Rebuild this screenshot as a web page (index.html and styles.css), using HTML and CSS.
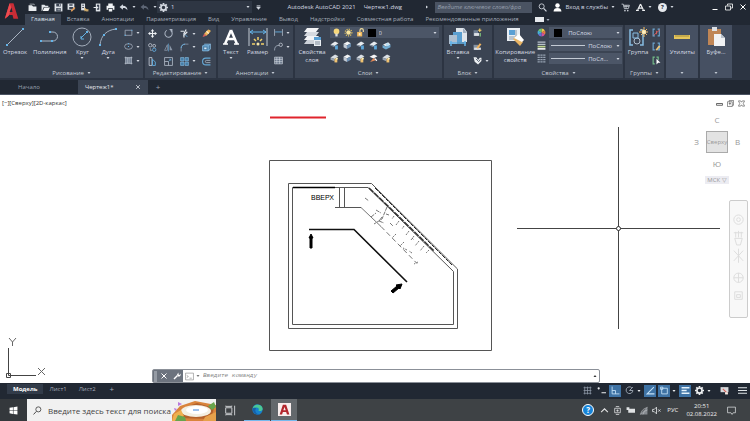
FILE: index.html
```html
<!DOCTYPE html>
<html lang="ru">
<head>
  <meta charset="UTF-8">
  <meta name="viewport" content="width=device-width, initial-scale=1.0">
  <title>Autodesk AutoCAD 2021 - Чертеж1.dwg</title>
  <link rel="stylesheet" href="styles.css">
</head>
<body>
<!-- shared icons -->
<svg class="sprite" aria-hidden="true">
  <symbol id="i-new" viewBox="0 0 16 16"><path d="M1 4h6l2 2h6v8H1z" fill="#e8ebef"/><path d="M3 2h8v2" stroke="#e8ebef" fill="none"/></symbol>
  <symbol id="i-open" viewBox="0 0 16 16"><path d="M1 3h5l2 2h5v2H5l-3 7H1z" fill="#dfe3e8"/><path d="M6 8h10l-3 6H3z" fill="#f4f5f7"/></symbol>
  <symbol id="i-save" viewBox="0 0 16 16"><path d="M1 1h14v14H1z" fill="#dfe3e8"/><path d="M4 1h8v5H4zM4 9h8v6H4z" fill="#3b4453"/><path d="M6 10h5v1H6zM6 12h5v1H6zM9 2h2v3H9z" fill="#dfe3e8"/></symbol>
  <symbol id="i-saveas" viewBox="0 0 16 16"><path d="M1 1h12v11H1z" fill="#dfe3e8"/><path d="M4 2h6v3H4zM4 7h7v4H4z" fill="#3b4453"/><path d="M7 13l6-6 2 2-6 6H7z" fill="#e29a55"/></symbol>
  <symbol id="i-web" viewBox="0 0 16 16"><path d="M2 1h7v12H2z" fill="#dfe3e8"/><path d="M4 3h3v2H4zM4 7h3v2H4z" fill="#3b4453"/><path d="M8 8l5 4-5 3z" fill="#e5b864"/><path d="M10 11h5v4h-5z" fill="#c8a66c"/></symbol>
  <symbol id="i-mobile" viewBox="0 0 16 16"><path d="M5 1h8v14H5z" fill="#dfe3e8"/><path d="M7 3h4v9H7z" fill="#3b4453"/><path d="M1 7h5V5l4 3-4 3V9H1z" fill="#e8ebef"/></symbol>
  <symbol id="i-print" viewBox="0 0 16 16"><path d="M4 1h8v4H4zM1 5h14v7h-3V9H4v3H1zM5 10h6v5H5z" fill="#f1f3f5"/></symbol>
  <symbol id="i-undo" viewBox="0 0 16 16"><path d="M1 7l6-5v3c5 0 8 3 8 8-2-3-4-4-8-4v3z" fill="currentColor"/></symbol>
  <symbol id="i-gear" viewBox="0 0 16 16"><circle cx="8" cy="8" r="4.500" fill="none" stroke="currentColor" stroke-width="3"/><path d="M8 0v3M8 13v3M0 8h3M13 8h3M2.300 2.300l2 2M11.700 11.700l2 2M2.300 13.700l2-2M11.700 4.300l2-2" stroke="currentColor" stroke-width="3"/></symbol>
  <symbol id="i-down" viewBox="0 0 8 8"><path d="M1 2h6L4 6z" fill="currentColor"/></symbol>
  <symbol id="i-search" viewBox="0 0 16 16"><circle cx="9.500" cy="6" r="4.500" fill="none" stroke="currentColor" stroke-width="1.500"/><path d="M6 9.500L1 15" stroke="currentColor" stroke-width="1.700"/></symbol>
  <symbol id="i-find" viewBox="0 0 16 16"><circle cx="6.500" cy="6" r="4.500" fill="none" stroke="currentColor" stroke-width="1.500"/><path d="M10 9.500l5 5.500" stroke="currentColor" stroke-width="2"/></symbol>
  <symbol id="i-user" viewBox="0 0 16 16"><circle cx="8" cy="4.500" r="4" fill="#fff"/><path d="M1 15c0-4 3-6 7-6s7 2 7 6z" fill="#fff"/></symbol>
  <symbol id="i-cart" viewBox="0 0 16 16"><path d="M1 2h3l2 8h7l2-6H5M5 6h9M9 4v6" fill="none" stroke="#c9ced6" stroke-width="1.500"/><circle cx="7" cy="13.500" r="1.500" fill="#c9ced6"/><circle cx="12" cy="13.500" r="1.500" fill="#c9ced6"/></symbol>
  <symbol id="i-adsk" viewBox="0 0 16 16"><path d="M8 2L3 12M8 2l5 10M5 9h6" stroke="#f0f2f4" stroke-width="2" fill="none"/><path d="M0 13h5M11 13h5" stroke="#f0f2f4" stroke-width="2"/></symbol>
  <symbol id="i-min" viewBox="0 0 16 16"><path d="M3 13h10" stroke="currentColor" stroke-width="2"/></symbol>
  <symbol id="i-restore" viewBox="0 0 16 16"><path d="M5 5V2h10v8h-3M1 6h10v8H1z" fill="none" stroke="currentColor" stroke-width="1.600"/></symbol>
  <symbol id="i-close" viewBox="0 0 16 16"><path d="M3 3l10 10M13 3L3 13" stroke="currentColor" stroke-width="2"/></symbol>
  <symbol id="i-line" viewBox="0 0 20 20"><path d="M2 18L18 2" stroke="#aab4c2"/><path d="M1 17h2v2H1zM17 1h2v2h-2z" fill="#65b4e8"/></symbol>
  <symbol id="i-pline" viewBox="0 0 20 20"><path d="M1 14h12a4.500 4.500 0 0 0 0-9h-3" fill="none" stroke="#aab4c2"/><path d="M0 13h2v2H0zM11 13h2v2h-2zM9 4h2v2H9z" fill="#65b4e8"/></symbol>
  <symbol id="i-circle" viewBox="0 0 20 20"><circle cx="10" cy="10" r="9" fill="none" stroke="#a3adbb"/><path d="M9 11l6-6M9 9v3h3" stroke="#65b4e8" fill="none"/><path d="M14 4h2v2h-2z" fill="#65b4e8"/></symbol>
  <symbol id="i-arc" viewBox="0 0 20 20"><path d="M2 18C3 8 9 3 18 2" fill="none" stroke="#a3adbb"/><path d="M1 17h2v2H1zM5 7h2v2H5zM17 1h2v2h-2z" fill="#65b4e8"/></symbol>
  <symbol id="i-rect" viewBox="0 0 16 16"><path d="M2 4h12v9H2z" fill="none" stroke="#aab4c2" stroke-width="1.300"/><path d="M1 12h2v2H1zM13 3h2v2h-2z" fill="#65b4e8"/></symbol>
  <symbol id="i-ellipse" viewBox="0 0 16 16"><ellipse cx="8" cy="8" rx="7" ry="5" fill="none" stroke="#aab4c2" stroke-width="1.300"/><path d="M7 7h2v2H7zM7 2h2v2H7z" fill="#65b4e8"/></symbol>
  <symbol id="i-hatch" viewBox="0 0 16 16"><path d="M2 2h12v12H2z" fill="#697689"/><path d="M1 3h14M1 13h14M3 1v14M13 1v14M6 3v10M9 3v10" fill="none" stroke="#cbd2dc"/></symbol>
  <symbol id="i-move" viewBox="0 0 16 16"><path d="M8 2v12M2 8h12" stroke="#eef1f5" stroke-width="2"/><path d="M8 0l3 4H5zM8 16l3-4H5zM0 8l4-3v6zM16 8l-4-3v6z" fill="#eef1f5"/></symbol>
  <symbol id="i-rotate" viewBox="0 0 16 16"><path d="M12 3a6.500 6.500 0 1 1-7-.5" fill="none" stroke="#aab4c2" stroke-width="1.800"/><path d="M9 0h6v6z" fill="#aab4c2"/></symbol>
  <symbol id="i-trim" viewBox="0 0 16 16"><path d="M1 4h6M11 1L7 8v7M13 5L6 12" stroke="#e3e7ed" stroke-width="2.200"/><path d="M9 10l4 4" stroke="#65b4e8" stroke-width="1.500"/></symbol>
  <symbol id="i-erase" viewBox="0 0 16 16"><path d="M1 14l3-6 4 4z" fill="#d9635d"/><path d="M4 8l7-7 4 1v3l-7 7z" fill="#efb75a"/><path d="M8 4l4 4" stroke="#fff1cf" stroke-width="2"/></symbol>
  <symbol id="i-copy" viewBox="0 0 16 16"><circle cx="4" cy="4" r="3" fill="none" stroke="#c3cad4" stroke-width="1.400"/><circle cx="11" cy="5" r="2.500" fill="none" stroke="#c3cad4" stroke-width="1.400"/><circle cx="11" cy="12" r="3" fill="none" stroke="#65b4e8" stroke-width="1.400"/><path d="M4 9v4h3" stroke="#c3cad4" fill="none"/></symbol>
  <symbol id="i-mirror" viewBox="0 0 16 16"><path d="M6 3v10H1z" fill="none" stroke="#8b97a8" stroke-width="1.400"/><path d="M10 3v10h5z" fill="#8b97a8"/><path d="M8 1v14" stroke="#65b4e8"/></symbol>
  <symbol id="i-fillet" viewBox="0 0 16 16"><path d="M2 15V9c0-4 3-7 7-7h6" fill="none" stroke="#8b97a8" stroke-width="1.500"/><path d="M2 9c0-4 3-7 7-7" fill="none" stroke="#65b4e8" stroke-width="1.500"/></symbol>
  <symbol id="i-explode" viewBox="0 0 16 16"><path d="M4 2h10v9l-3 3H1V5z" fill="#497ea8"/><path d="M1 5h10v9H1zM11 5l4-3M4 2h11v9l-4 3" fill="none" stroke="#8fc6ec" stroke-width="1.300"/><path d="M4 8h4v3H4z" fill="#dbe9f4"/></symbol>
  <symbol id="i-stretch" viewBox="0 0 16 16"><path d="M2 1h5v14H2z" fill="none" stroke="#c3cad4" stroke-width="1.500"/><path d="M8 4l5 5v6H8z" fill="none" stroke="#65b4e8" stroke-width="1.500"/></symbol>
  <symbol id="i-scale" viewBox="0 0 16 16"><path d="M1 1h14v14H1zM1 8h7v7" fill="none" stroke="#b5bfcc" stroke-width="1.400"/><path d="M8 8l4-4M9 4h3v3" stroke="#65b4e8" fill="none"/></symbol>
  <symbol id="i-array" viewBox="0 0 16 16"><path d="M1 1h6v6H1zM9 1h6v6H9zM1 9h6v6H1zM9 9h6v6H9z" fill="#477fa9" stroke="#8fc6ec"/></symbol>
  <symbol id="i-offset" viewBox="0 0 16 16"><path d="M15 2H7a6 6 0 0 0 0 12h8" fill="none" stroke="#65a7d4" stroke-width="2"/><path d="M15 6H8a2 2 0 0 0 0 4h7" fill="none" stroke="#aab4c2" stroke-width="1.500"/></symbol>
  <symbol id="i-text" viewBox="0 0 20 20"><path d="M10 3L4 17M10 3l6 14M6 12h8" fill="none" stroke="#fff" stroke-width="2.500"/><path d="M2 17h5M13 17h5" stroke="#fff" stroke-width="1.500"/></symbol>
  <symbol id="i-dim" viewBox="0 0 20 20"><path d="M1 1v18M19 1v18" stroke="#c3cad4"/><path d="M2 5h16M5 3L2 5l3 2M15 3l3 2-3 2" stroke="#65b4e8" fill="none"/><path d="M10 10v3M6 12l2 2M14 12l-2 2M4 17h3M13 17h3" stroke="#f2d16b" stroke-width="1.500"/><circle cx="10" cy="17" r="1.500" fill="#f7e6a5"/></symbol>
  <symbol id="i-lindim" viewBox="0 0 16 16"><path d="M1 2v12M15 2v12" stroke="#aab4c2" stroke-width="1.500"/><path d="M2 7h12" stroke="#65b4e8" stroke-width="1.500"/></symbol>
  <symbol id="i-leader" viewBox="0 0 16 16"><path d="M1 15c0-6 2-9 8-9" fill="none" stroke="#aab4c2" stroke-width="1.400"/><circle cx="12" cy="5" r="3" fill="none" stroke="#c3cad4" stroke-width="1.400"/></symbol>
  <symbol id="i-table" viewBox="0 0 16 16"><path d="M1 2h14v12H1z" fill="#697689"/><path d="M1 2h14v12H1zM1 6h14M1 10h14M5 2v12M10 2v12" fill="none" stroke="#dbe0e7"/></symbol>
  <symbol id="i-layers" viewBox="0 0 20 20"><path d="M5 1h12l-3 4H2z" fill="#f3f4f6"/><path d="M5 5h12l-3 4H2z" fill="#d6dae0"/><path d="M5 9h12l-3 4H2z" fill="#f3f4f6"/><path d="M5 13h10l-3 4H2z" fill="#cdd2d9"/><path d="M12 10h7v9h-7z" fill="#e9eef3"/><path d="M12 10h7v3h-7z" fill="#5ba0d4"/><path d="M13 15h5M13 17h5" stroke="#7c8998"/></symbol>
  <symbol id="i-bulb" viewBox="0 0 16 16"><circle cx="8" cy="6" r="5" fill="#f6d77b"/><path d="M6 10h4v5H6z" fill="#d9dde2"/></symbol>
  <symbol id="i-sun" viewBox="0 0 16 16"><circle cx="8" cy="8" r="4" fill="#f9e59d"/><circle cx="8" cy="8" r="6" fill="none" stroke="#eac95f" stroke-width="2" stroke-dasharray="2 2"/></symbol>
  <symbol id="i-lock" viewBox="0 0 16 16"><path d="M7 8V4a3 3 0 0 1 6 0v3" fill="none" stroke="#f3dfa0" stroke-width="2"/><path d="M2 7h9v8H2z" fill="#f0b95d"/><path d="M5 9h3v4H5z" fill="#fff0cc"/></symbol>
  <symbol id="i-lay-a" viewBox="0 0 16 16"><path d="M1 6l8-5 6 3-7 5z" fill="#e7ebef"/><path d="M1 6l7 3v2L1 8z" fill="#8693a5"/><path d="M9 8h5v7H9z" fill="#5ca5d8"/></symbol>
  <symbol id="i-lay-b" viewBox="0 0 16 16"><path d="M1 5l7-4 6 3-7 4z" fill="#f1f3f5"/><path d="M1 5l6 3v6l-6-3z" fill="#c5ccd6"/><path d="M7 8l7-4v6l-7 4z" fill="#6c90b4"/></symbol>
  <symbol id="i-lay-c" viewBox="0 0 16 16"><path d="M1 6l8-5 6 3-7 5z" fill="#d9dfe5"/><path d="M1 6l7 3v4L1 10z" fill="#9aa5b3"/><path d="M8 8h5v7H8z" fill="#efc271"/><circle cx="12" cy="8" r="2" fill="#fff0b7"/></symbol>
  <symbol id="i-lay-d" viewBox="0 0 16 16"><path d="M2 6l9-4 4 4-8 4z" fill="#e8ebef"/><path d="M1 7l6 3 8-4v5l-8 4-6-3z" fill="#70acd2"/><path d="M7 4h5v5H7z" fill="#b8dff5"/></symbol>
  <symbol id="i-lay-e" viewBox="0 0 16 16"><path d="M1 5l8-4 6 3-7 4z" fill="#f3f4f6"/><path d="M2 14l6-7 4 4z" fill="#e58956"/><path d="M10 8l4 4" stroke="#fff" stroke-width="2"/></symbol>
  <symbol id="i-insert" viewBox="0 0 20 20"><path d="M8 1h8l3 4v10H8z" fill="#dfe5eb"/><path d="M15 1v5h4" fill="#9eafc1"/><path d="M5 5h9v10H5z" fill="#5a9fd1"/><path d="M1 8h8v9H1z" fill="#aebfd0"/><path d="M2 16h16M3 14v5M17 14v5" stroke="#65b4e8" stroke-width="1.500"/></symbol>
  <symbol id="i-blk-a" viewBox="0 0 16 16"><path d="M1 4h8v10H1z" fill="#708094"/><path d="M2 9h9v5H2z" fill="#dde1e6"/><path d="M12 1v6M9 4h6" stroke="#f4cf67" stroke-width="2"/><path d="M13 9v6" stroke="#7dc27c" stroke-width="2"/></symbol>
  <symbol id="i-blk-b" viewBox="0 0 16 16"><path d="M1 5h8v9H1z" fill="#8593a4"/><path d="M2 10h12v4H2z" fill="#dde1e6"/><path d="M6 10l6-8 3 2-6 8z" fill="#efb35e"/></symbol>
  <symbol id="i-blk-c" viewBox="0 0 16 16"><path d="M1 2h5l3 5 3-4h3v6l-6 6-6-5z" fill="#eceff2"/><path d="M5 5l5 5 3-4" stroke="#4b5869" stroke-width="1.500" fill="none"/></symbol>
  <symbol id="i-match" viewBox="0 0 20 20"><path d="M2 1h13v13H2z" fill="#e9eef3"/><path d="M4 3h6v5H4z" fill="#5ba0d4"/><path d="M11 3v6M4 10h9M4 12h9" stroke="#8999aa"/><path d="M8 12l3-3 7 6-3 4z" fill="#e9b464"/><path d="M9 11l5-4 5 6-2 2z" fill="#fff"/></symbol>
  <symbol id="i-color" viewBox="0 0 16 16"><path d="M8 8V1a7 7 0 0 1 6 3.500z" fill="#e8c84c"/><path d="M8 8l6-3.500a7 7 0 0 1 0 7z" fill="#e87941"/><path d="M8 8l6 3.500A7 7 0 0 1 8 15z" fill="#d4509c"/><path d="M8 8v7a7 7 0 0 1-6-3.500z" fill="#646fd5"/><path d="M8 8l-6 3.500a7 7 0 0 1 0-7z" fill="#46afd8"/><path d="M8 8L2 4.500A7 7 0 0 1 8 1z" fill="#6dc670"/></symbol>
  <symbol id="i-weight" viewBox="0 0 16 16"><path d="M1 2h14M1 6h14" stroke="#b9c1cb" stroke-width="2"/><path d="M1 10h14" stroke="#bfd68e" stroke-width="3"/><path d="M1 14h14" stroke="#eef0f2" stroke-width="3"/></symbol>
  <symbol id="i-ltype" viewBox="0 0 16 16"><path d="M1 2h14M1 6h14M1 10h14M1 14h14" stroke="#97a3b3" stroke-width="2" stroke-dasharray="4 1"/></symbol>
  <symbol id="i-group" viewBox="0 0 20 20"><path d="M5 3H2v15h3M12 3h3v15h-3" fill="none" stroke="#87bce2" stroke-width="1.500"/><circle cx="9" cy="14" r="3" fill="none" stroke="#b1bfce"/><path d="M5 6h5v5H5z" fill="none" stroke="#87bce2"/><path d="M16 0v10M11 5h9M13 2l6 6M19 2l-6 6" stroke="#f4bd66"/><circle cx="16" cy="5" r="2" fill="#fff0c0"/></symbol>
  <symbol id="i-grp-a" viewBox="0 0 16 16"><path d="M5 2H2v12h3M10 2h3v12h-3" fill="none" stroke="#6da7d2" stroke-width="2"/><path d="M3 13L14 3M8 5v6" stroke="#d95c5c" stroke-width="1.600"/></symbol>
  <symbol id="i-grp-b" viewBox="0 0 16 16"><path d="M5 2H2v12h3M10 2h3v12h-3" fill="none" stroke="#6da7d2" stroke-width="2"/><path d="M6 14l6-8 3 2-6 7z" fill="#edc77c"/></symbol>
  <symbol id="i-grp-c" viewBox="0 0 16 16"><path d="M5 2H2v12h3M8 2h3v5" fill="none" stroke="#74be8a" stroke-width="2"/><path d="M8 5l7 7h-4l-3 3z" fill="#fff"/></symbol>
  <symbol id="i-ruler" viewBox="0 0 20 20"><path d="M2 8h16v4H2z" fill="#e6c65c"/><path d="M4 8v2M6 8v2M8 8v2M10 8v2M12 8v2M14 8v2M16 8v2" stroke="#8a752f" stroke-width=".7"/></symbol>
  <symbol id="i-paste" viewBox="0 0 20 20"><path d="M2 2h13v16H2z" fill="#c08656"/><path d="M6 0h5v4H6z" fill="#dce0e5"/><path d="M8 7h7l4 4v8H8z" fill="#f1f2f4"/><path d="M15 7v4h4" fill="#b9c1cb"/></symbol>
</svg>

<header class="app-header">
  <a class="logo" href="#" aria-label="AutoCAD">
    <svg viewBox="0 0 26 25"><path d="M10 3h4l5 16h-5l-1-4H9l-1 2-3 2z" fill="#c92d36"/><path d="M10 3L5 19l4-3 3-8z" fill="#ee4b50"/><path d="M10 12l2-5 1 5z" fill="#212833"/></svg>
  </a>
  <div class="header-rows">
    <div class="titlebar">
      <div class="quick">
        <button aria-label="Создать"><svg><use href="#i-new"/></svg></button>
        <button aria-label="Открыть"><svg><use href="#i-open"/></svg></button>
        <button aria-label="Сохранить"><svg><use href="#i-save"/></svg></button>
        <button aria-label="Сохранить как"><svg><use href="#i-saveas"/></svg></button>
        <button aria-label="Открыть из Web"><svg><use href="#i-web"/></svg></button>
        <button aria-label="Сохранить в Web"><svg><use href="#i-mobile"/></svg></button>
        <button aria-label="Печать"><svg><use href="#i-print"/></svg></button>
        <button aria-label="Отменить"><svg><use href="#i-undo"/></svg></button>
        <svg class="caret"><use href="#i-down"/></svg>
        <button class="redo" aria-label="Повторить"><svg><use href="#i-undo"/></svg></button>
        <svg class="caret"><use href="#i-down"/></svg>
      </div>
      <div class="workspace">
        <svg class="icon"><use href="#i-gear"/></svg>
        <select aria-label="Рабочее пространство"><option>1</option></select>
        <svg class="caret"><use href="#i-down"/></svg>
      </div>
      <button class="more" aria-label="Настройка панели"><svg viewBox="0 0 8 8"><path d="M1 1h6M1 3h6L4 7z" fill="currentColor" stroke="currentColor"/></svg></button>
      <h1><span>Autodesk AutoCAD 2021</span><span>Чертеж1.dwg</span></h1>
      <div class="account">
        <svg class="caret" viewBox="0 0 8 8"><path d="M2 1v6l4-3z" fill="currentColor"/></svg>
        <input class="keyword" type="search" aria-label="Поиск" placeholder="Введите ключевое слово/фразу">
        <button aria-label="Найти"><svg class="icon"><use href="#i-find"/></svg></button>
        <button class="signin"><svg class="icon"><use href="#i-user"/></svg>Вход в службы<svg class="caret"><use href="#i-down"/></svg></button>
        <button aria-label="Магазин"><svg class="icon"><use href="#i-cart"/></svg></button>
        <button aria-label="Приложения"><svg class="icon"><use href="#i-adsk"/></svg><svg class="caret"><use href="#i-down"/></svg></button>
        <button class="help" aria-label="Справка"><b>?</b><svg class="caret"><use href="#i-down"/></svg></button>
      </div>
      <div class="window-controls">
        <button aria-label="Свернуть"><svg><use href="#i-min"/></svg></button>
        <button aria-label="Восстановить"><svg><use href="#i-restore"/></svg></button>
        <button aria-label="Закрыть"><svg><use href="#i-close"/></svg></button>
      </div>
    </div>
    <nav class="ribbon-tabs">
      <a class="active" href="#">Главная</a>
      <a href="#">Вставка</a>
      <a href="#">Аннотации</a>
      <a href="#">Параметризация</a>
      <a href="#">Вид</a>
      <a href="#">Управление</a>
      <a href="#">Вывод</a>
      <a href="#">Надстройки</a>
      <a href="#">Совместная работа</a>
      <a href="#">Рекомендованные приложения</a>
      <button aria-label="Свернуть ленту"><i></i><svg class="caret"><use href="#i-down"/></svg></button>
    </nav>
  </div>
</header>

<main class="ribbon">
  <section class="panel">
    <div class="tools draw-tools">
      <button class="big"><svg><use href="#i-line"/></svg>Отрезок</button>
      <button class="big"><svg><use href="#i-pline"/></svg>Полилиния</button>
      <button class="big"><svg><use href="#i-circle"/></svg>Круг<svg class="caret"><use href="#i-down"/></svg></button>
      <button class="big"><svg><use href="#i-arc"/></svg>Дуга<svg class="caret"><use href="#i-down"/></svg></button>
      <div class="stack">
        <button aria-label="Прямоугольник"><svg><use href="#i-rect"/></svg><svg class="caret"><use href="#i-down"/></svg></button>
        <button aria-label="Эллипс"><svg><use href="#i-ellipse"/></svg><svg class="caret"><use href="#i-down"/></svg></button>
        <button aria-label="Штриховка"><svg><use href="#i-hatch"/></svg><svg class="caret"><use href="#i-down"/></svg></button>
      </div>
    </div>
    <button class="panel-title">Рисование <svg class="caret"><use href="#i-down"/></svg></button>
  </section>

  <section class="panel">
    <div class="tools edit-tools">
      <button aria-label="Перенести"><svg><use href="#i-move"/></svg></button>
      <button aria-label="Повернуть"><svg><use href="#i-rotate"/></svg></button>
      <button aria-label="Обрезать"><svg><use href="#i-trim"/></svg><svg class="caret"><use href="#i-down"/></svg></button>
      <button aria-label="Стереть"><svg><use href="#i-erase"/></svg></button>
      <button aria-label="Копировать"><svg><use href="#i-copy"/></svg></button>
      <button aria-label="Зеркало"><svg><use href="#i-mirror"/></svg></button>
      <button aria-label="Сопряжение"><svg><use href="#i-fillet"/></svg><svg class="caret"><use href="#i-down"/></svg></button>
      <button aria-label="Расчленить"><svg><use href="#i-explode"/></svg></button>
      <button aria-label="Растянуть"><svg><use href="#i-stretch"/></svg></button>
      <button aria-label="Масштаб"><svg><use href="#i-scale"/></svg></button>
      <button aria-label="Массив"><svg><use href="#i-array"/></svg><svg class="caret"><use href="#i-down"/></svg></button>
      <button aria-label="Подобие"><svg><use href="#i-offset"/></svg></button>
    </div>
    <button class="panel-title">Редактирование <svg class="caret"><use href="#i-down"/></svg></button>
  </section>

  <section class="panel">
    <div class="tools note-tools">
      <button class="big"><svg><use href="#i-text"/></svg>Текст<svg class="caret"><use href="#i-down"/></svg></button>
      <button class="big"><svg><use href="#i-dim"/></svg>Размер</button>
      <div class="stack">
        <button aria-label="Линейный"><svg><use href="#i-lindim"/></svg><svg class="caret"><use href="#i-down"/></svg></button>
        <button aria-label="Выноска"><svg><use href="#i-leader"/></svg><svg class="caret"><use href="#i-down"/></svg></button>
        <button aria-label="Таблица"><svg><use href="#i-table"/></svg></button>
      </div>
    </div>
    <button class="panel-title">Аннотации <svg class="caret"><use href="#i-down"/></svg></button>
  </section>

  <section class="panel">
    <div class="tools layer-tools">
      <button class="big"><svg><use href="#i-layers"/></svg>Свойства<br>слоя</button>
      <div class="layer-side">
        <div class="combo">
          <svg><use href="#i-bulb"/></svg><svg><use href="#i-sun"/></svg><svg><use href="#i-lock"/></svg><i class="swatch"></i>
          <select aria-label="Слой"><option>0</option></select>
          <svg class="caret"><use href="#i-down"/></svg>
        </div>
        <div class="layer-grid">
          <button aria-label="Отключить"><svg><use href="#i-lay-a"/></svg></button>
          <button aria-label="Изолировать"><svg><use href="#i-lay-b"/></svg></button>
          <button aria-label="Заморозить"><svg><use href="#i-lay-a"/></svg></button>
          <button aria-label="Блокировать"><svg><use href="#i-lay-a"/></svg></button>
          <button aria-label="Сделать текущим"><svg><use href="#i-lay-d"/></svg></button>
          <button aria-label="Включить все слои"><svg><use href="#i-lay-c"/></svg></button>
          <button aria-label="Отменить изоляцию"><svg><use href="#i-lay-b"/></svg></button>
          <button aria-label="Разморозить все слои"><svg><use href="#i-lay-c"/></svg></button>
          <button aria-label="Разблокировать"><svg><use href="#i-lay-e"/></svg></button>
          <button aria-label="Копировать свойства слоя"><svg><use href="#i-lay-c"/></svg></button>
        </div>
      </div>
    </div>
    <button class="panel-title">Слои <svg class="caret"><use href="#i-down"/></svg></button>
  </section>

  <section class="panel">
    <div class="tools">
      <button class="big"><svg><use href="#i-insert"/></svg>Вставка<svg class="caret"><use href="#i-down"/></svg></button>
      <div class="stack">
        <button aria-label="Создать блок"><svg><use href="#i-blk-a"/></svg></button>
        <button aria-label="Редактировать блок"><svg><use href="#i-blk-b"/></svg></button>
        <button aria-label="Атрибуты"><svg><use href="#i-blk-c"/></svg><svg class="caret"><use href="#i-down"/></svg></button>
      </div>
    </div>
    <button class="panel-title">Блок <svg class="caret"><use href="#i-down"/></svg></button>
  </section>

  <section class="panel">
    <div class="tools prop-tools">
      <button class="big"><svg><use href="#i-match"/></svg>Копирование<br>свойств</button>
      <div class="props">
        <div class="prop"><svg><use href="#i-color"/></svg><div class="combo"><i class="swatch"></i><select aria-label="Цвет"><option>ПоСлою</option></select><svg class="caret"><use href="#i-down"/></svg></div></div>
        <div class="prop"><svg><use href="#i-weight"/></svg><div class="combo"><i class="rule"></i><select aria-label="Вес линий"><option>ПоСлою</option></select><svg class="caret"><use href="#i-down"/></svg></div></div>
        <div class="prop"><svg><use href="#i-ltype"/></svg><div class="combo"><i class="rule"></i><select aria-label="Тип линий"><option>ПоСл...</option></select><svg class="caret"><use href="#i-down"/></svg></div></div>
      </div>
    </div>
    <button class="panel-title">Свойства <svg class="caret"><use href="#i-down"/></svg></button>
  </section>

  <section class="panel">
    <div class="tools">
      <button class="big"><svg><use href="#i-group"/></svg>Группа</button>
      <div class="stack">
        <button aria-label="Разгруппировать"><svg><use href="#i-grp-a"/></svg></button>
        <button aria-label="Редактировать группу"><svg><use href="#i-grp-b"/></svg></button>
        <button aria-label="Выбор группы"><svg><use href="#i-grp-c"/></svg></button>
      </div>
    </div>
    <button class="panel-title">Группы <svg class="caret"><use href="#i-down"/></svg></button>
  </section>

  <section class="panel folded">
    <div class="tools"><button class="big"><svg><use href="#i-ruler"/></svg>Утилиты</button></div>
    <button class="panel-title" aria-label="Развернуть утилиты"><svg class="caret"><use href="#i-down"/></svg></button>
  </section>
  <section class="panel folded">
    <div class="tools"><button class="big"><svg><use href="#i-paste"/></svg>Буфе...</button></div>
    <button class="panel-title" aria-label="Развернуть буфер"><svg class="caret"><use href="#i-down"/></svg></button>
  </section>
</main>

<nav class="file-tabs">
  <a href="#">Начало</a>
  <a class="active" href="#">Чертеж1*<svg><use href="#i-close"/></svg></a>
  <button aria-label="Новый чертеж">+</button>
</nav>

<div class="canvas">
  <svg class="drawing" viewBox="0 95 750 288" role="img" aria-label="План лестницы">
    <g fill="none" stroke="#555">
      <path d="M269.500 160.500h222v190h-222z"/>
      <path d="M288.500 183.500h83l86 85.500v59.500h-169z"/>
      <path d="M292.500 187.500H368l85.500 84v53h-161z"/>
      <path d="M339.500 188v19M344.500 188v19M335 207.500h26"/>
    </g>
    <path d="M293 187.500h42" stroke="#000" stroke-width="1.500"/>
    <path d="M270 117.500h56" stroke="#e0242c" stroke-width="2"/>
    <path d="M375 188l77 77" stroke="#222" stroke-dasharray="4 1"/>
    <path d="M369 188l20 19 45 44" stroke="#333" stroke-width="1.500" stroke-dasharray="6 1" fill="none"/>
    <g fill="none" stroke="#777">
      <path d="M361 207.500l20 19" />
      <path d="M381 226.500l36 37" stroke-dasharray="5 3"/>
      <path d="M365 198l4 3M376 210l5 3M387 207l-5 12-8 5M371 217l5-4M382 217l-3 4 5 2M390 223l3 3M386 214l3 1" stroke-dasharray="4 1"/>
      <path d="M394 216l-2 3M399 221l-3 4M404 226l-2 3M409 231l-3 4M414 236l-3 4M419 241l-4 5M424 246l-4 5M429 250l-3 3M396 234l-4 4M404 242l-4 4M407 250l-4-2M412 253l-3-2M412 238l2 2M418 262l-4 2" stroke-dasharray="2 1"/>
    </g>
    <path d="M309 229.500h45l53 52.500" fill="none" stroke="#111" stroke-width="1.600"/>
    <path d="M311 234l2 4h-1v10h-2v-10h-1zM402 284l-2 5-1-1-6 5-2-2 6-5-1-1z" fill="#000" stroke="#000" stroke-linejoin="round"/>
    <text x="311" y="200" font-size="7">ВВЕРХ</text>
    <g fill="none" stroke="#444">
      <path d="M517 228.500h203M618.500 127v202"/>
      <path d="M8.500 348v27.500H36M6.500 373.500h4v4h-4z"/>
    </g>
    <circle cx="618.500" cy="228.500" r="2" fill="#fff" stroke="#333"/>
    <path d="M9 338l3.500 4 3.500-4M12.500 342v4M38 368l7 7M45 368l-7 7" fill="none" stroke="#666"/>
  </svg>

  <div class="view-label">[−][Сверху][2D-каркас]</div>
  <div class="view-controls">
    <button aria-label="Свернуть вид"><svg viewBox="0 0 16 16"><path d="M1 8h14v4H1z" fill="none" stroke="currentColor" stroke-width="2"/></svg></button>
    <button aria-label="Развернуть вид"><svg viewBox="0 0 16 16"><path d="M5 4V1h10v11h-3M1 4h11v11H1zM4 8h5M6.500 5v7" fill="none" stroke="currentColor" stroke-width="1.500"/></svg></button>
    <button aria-label="Закрыть вид"><svg viewBox="0 0 16 16"><path d="M1 2h5l2 3 2-3h5l-3 6 3 6h-5l-2-3-2 3H1l3-6z" fill="none" stroke="currentColor" stroke-width="1.500"/></svg></button>
  </div>
  <div class="viewcube">
    <span class="north">С</span>
    <span class="west">З</span><button class="face">Сверху</button><span class="east">В</span>
    <span class="south">Ю</span>
    <button class="ucs">МСК ▽</button>
  </div>
  <div class="navbar">
    <svg viewBox="0 0 16 112"><g fill="none" stroke="#dcdcdc"><circle cx="8" cy="14" r="5"/><circle cx="8" cy="14" r="2"/><path d="M3 28h10M5 33v-6M8 33v-7M11 33v-6M4 34h8l-2 7H6zM3 47l10 11M13 47L3 58M8 45v15"/><circle cx="8" cy="76" r="5"/><path d="M3 76h10M8 71v10M4 91h8v8H4zM6 94h4v3H6z"/></g></svg>
  </div>

  <form class="command">
    <i class="grip"></i>
    <button type="button" aria-label="Закрыть"><svg><use href="#i-close"/></svg></button>
    <button type="button" aria-label="Настройка"><svg viewBox="0 0 16 16"><path d="M2 14l7-7" stroke="currentColor" stroke-width="3"/><path d="M8 5l3-4v4l3 1 1-3c2 4-2 7-5 6z" fill="currentColor"/></svg></button>
    <label for="cmd"><svg viewBox="0 0 16 16"><path d="M1 2h14v12H1zM3 6l3 2-3 2M8 11h4" fill="none" stroke="currentColor"/></svg><svg class="caret"><use href="#i-down"/></svg></label>
    <input id="cmd" type="text" placeholder="Введите команду">
    <svg class="caret up"><use href="#i-down"/></svg>
  </form>
</div>

<footer class="status">
  <nav class="layout-tabs">
    <a class="active" href="#">Модель</a>
    <a href="#">Лист1</a>
    <a href="#">Лист2</a>
    <button aria-label="Новый лист">+</button>
  </nav>
  <div class="modes">
    <button aria-label="Сетка"><svg viewBox="0 0 16 16"><path d="M1 3h14M1 8h14M1 13h14M3 1v14M8 1v14M13 1v14" stroke="#929cab" stroke-width="1.300"/></svg></button>
    <button aria-label="Привязка"><svg viewBox="0 0 16 16"><path d="M1 4h4M3 2v4M8 12h8" stroke="#eef0f2" stroke-width="2"/></svg></button>
    <button class="on" aria-label="Орто"><svg viewBox="0 0 16 16"><path d="M2 1v13h13M2 8h6v6" fill="none" stroke="#c6e2f8" stroke-width="1.500"/></svg></button>
    <button aria-label="Полярное"><svg viewBox="0 0 16 16"><path d="M12 3a6 6 0 1 0 2 5H8l6-6" fill="none" stroke="#aab3bf" stroke-width="1.500"/></svg></button>
    <svg class="caret"><use href="#i-down"/></svg>
    <button class="on" aria-label="Отслеживание"><svg viewBox="0 0 16 16"><path d="M15 14H2L14 2" fill="none" stroke="#c6e2f8" stroke-width="1.800"/></svg></button>
    <button class="on" aria-label="Объектная привязка"><svg viewBox="0 0 16 16"><path d="M3 4h10v10H3zM1 2h4v4H1z" fill="none" stroke="#c6e2f8" stroke-width="1.500"/></svg></button>
    <svg class="caret"><use href="#i-down"/></svg>
    <button class="on" aria-label="Вес линий"><svg viewBox="0 0 16 16"><path d="M1 3h14M1 8h9M1 13h14" stroke="#e7f3fc" stroke-width="2.500"/></svg></button>
    <button aria-label="Параметры"><svg><use href="#i-gear"/></svg></button>
    <svg class="caret"><use href="#i-down"/></svg>
    <button class="wide" aria-label="Уведомления"><svg viewBox="0 0 16 16"><path d="M1 2h14v9H1z" fill="#d7d9dc"/><path d="M5 5l9 9" stroke="#d66057" stroke-width="2"/><path d="M9 11h5v4H9z" fill="#f5eee9"/></svg></button>
    <button aria-label="Меню"><svg viewBox="0 0 16 16"><path d="M0 3h16M0 8h16M0 13h16" stroke="#e0e3e7" stroke-width="1.800"/></svg></button>
  </div>
</footer>

<footer class="taskbar">
  <button class="start" aria-label="Пуск"><svg viewBox="0 0 16 16"><path d="M1 3l6-1v5H1zM8 2l7-1v6H8zM1 8h6v6l-6-1zM8 8h7v7l-7-1z" fill="#fff"/></svg></button>
  <label class="search">
    <svg class="icon"><use href="#i-search"/></svg>
    <input type="text" placeholder="Введите здесь текст для поиска">
    <svg class="art" viewBox="0 0 44 22"><path d="M0 16l8-9 15-5 21 4v16H0z" fill="#d9843c"/><path d="M4 19l7-10 14-5 17 5-3 11z" fill="#b4622c"/><ellipse cx="24" cy="12" rx="15" ry="6" fill="#f3efe2"/><ellipse cx="25" cy="11" rx="11" ry="4" fill="#fff"/><path d="M21 10h6v2h-6z" fill="#9dc1ed"/><path d="M2 15l7-4 3 6-8 5H0z" fill="#efb04e"/><path d="M3 22l3-6 7 2 1 4zM36 7l6-4 2 5-4 3z" fill="#67a44c"/><path d="M6 3l4 2-4 2zM2 9l3 1-2 2z" fill="#b979dd"/><path d="M33 18l11-5v9H31z" fill="#e6a14b"/></svg>
  </label>
  <button class="task" aria-label="Представление задач"><svg viewBox="0 0 16 16"><path d="M1 4h9v8H1zM1 1v1M10 1v1M1 14v1M10 14v1M14 1v14M1 14h9M1 2h9" fill="none" stroke="#d9dbdd" stroke-width="1.300"/></svg></button>
  <button class="task running" aria-label="Edge"><svg viewBox="0 0 16 16"><circle cx="8" cy="8" r="7.500" fill="#1681ce"/><path d="M1 7C2-1 15-1 15.500 7c0 4-6 4-6 2 1-2 0-4-3-4S2 6 1 7z" fill="#4bc894"/><path d="M6 6c-3 4 0 9 5 9-6 2-10-3-10-8 1-2 3-2 5-1z" fill="#1760a8"/></svg></button>
  <button class="task running current" aria-label="AutoCAD"><svg viewBox="0 0 16 16"><path d="M0 0h16v16H0z" fill="#f8eeee"/><path d="M6 2h4l4 12h-3l-1-3H6l-1 3H2zM8 5L6.500 9h3z" fill="#b3262d" fill-rule="evenodd"/></svg></button>
  <div class="tray">
    <span class="tray-help">?</span>
    <svg viewBox="0 0 16 16"><path d="M2 11l6-6 6 6" fill="none" stroke="#e7e8e9" stroke-width="1.800"/></svg>
    <svg viewBox="0 0 16 16"><path d="M3 4h10v8H3zM5 1h6M5 15h6" fill="none" stroke="#d5d7d9" stroke-width="1.500"/><circle cx="8" cy="8" r="2" fill="#d5d7d9"/></svg>
    <svg viewBox="0 0 16 16"><path d="M4 5h12v7H4zM1 2h5v5H1z" fill="#e0e2e4"/></svg>
    <svg viewBox="0 0 16 16"><path d="M1 15L15 1v14z" fill="#858a8f"/><path d="M7 15a9 9 0 0 1 8-8M3 15A13 13 0 0 1 15 3" fill="none" stroke="#c9cccf"/></svg>
    <svg viewBox="0 0 16 16"><path d="M1 6h3l4-4v12l-4-4H1zM11 6l4 4M15 6l-4 4" fill="none" stroke="#e0e2e4" stroke-width="1.500"/></svg>
    <span class="lang">РУС</span>
    <time datetime="2022-08-02T20:51">20:51<br>02.08.2022</time>
    <svg class="notice" viewBox="0 0 16 16"><path d="M1 2h14v10h-4l-2 3-2-3H1z" fill="none" stroke="#e0e2e4" stroke-width="1.300"/></svg>
  </div>
</footer>
</body>
</html>
```
FILE: styles.css
```css
* {
  box-sizing: border-box;
}
body {
  margin: 0;
  min-height: 100vh;
  display: flex;
  flex-direction: column;
  font-family: "Open Sans", "Noto Sans", sans-serif;
  font-size: 6px;
  line-height: 8px;
  color: #d5dae2;
  background: #212833;
}
button, input, select {
  font: inherit;
  color: inherit;
  background: none;
  border: 0;
  padding: 0;
  margin: 0;
  outline: 0;
}
button {
  display: flex;
  align-items: center;
  justify-content: center;
}
select {
  appearance: none;
  flex: 1;
  min-width: 0;
}
a {
  color: inherit;
  text-decoration: none;
}
svg {
  display: block;
  flex: none;
  width: 9px;
  height: 9px;
}
.sprite {
  position: absolute;
  width: 0;
  height: 0;
}
svg.caret {
  width: 4px;
  height: 4px;
}

/* header */
.app-header {
  display: flex;
}
.logo svg {
  width: 25px;
  height: 25px;
}
.header-rows {
  flex: 1;
  min-width: 0;
}
.titlebar {
  display: flex;
  align-items: center;
  height: 14px;
}
.quick {
  display: flex;
  align-items: center;
  gap: 4px;
  padding-left: 3px;
}
.redo {
  color: #5d6675;
}
.workspace {
  display: flex;
  align-items: center;
  gap: 3px;
  flex: 0 1 95px;
  height: 12px;
  padding: 0 2px;
  background: #2e3643;
}
.more {
  width: 12px;
}
.more svg {
  width: 5px;
  height: 5px;
}
.titlebar h1 {
  flex: 1;
  display: flex;
  justify-content: center;
  gap: 8px;
  margin: 0;
  font-size: 6px;
  font-weight: 400;
  white-space: nowrap;
}
.account {
  display: flex;
  align-items: center;
  gap: 6px;
}
.account button {
  gap: 3px;
}
.keyword {
  width: 97px;
  height: 11px;
  padding: 0 2px;
  background: #4a5362;
  font-style: italic;
}
.keyword::placeholder {
  color: #959eac;
}
.help b {
  width: 9px;
  height: 9px;
  border-radius: 50%;
  background: #e6e9ed;
  color: #212833;
  line-height: 9px;
}
.window-controls {
  display: flex;
  gap: 6px;
  padding: 0 3px 0 37px;
  color: #fff;
}
.window-controls svg {
  width: 8px;
  height: 8px;
}
.ribbon-tabs {
  display: flex;
  height: 11px;
  color: #a5adba;
}
.ribbon-tabs a {
  padding: 1px 6px;
  white-space: nowrap;
}
.ribbon-tabs .active {
  background: #3b4453;
  color: #dce1e8;
}
.ribbon-tabs button {
  gap: 2px;
  padding: 0 10px;
}
.ribbon-tabs i {
  width: 9px;
  height: 5px;
  background: #e6e9ed;
}

/* ribbon */
.ribbon {
  display: grid;
  grid-template-columns: 144fr 71fr 76fr 147fr 49fr 129fr 40fr 32fr 32fr 16fr;
  gap: 2px;
  background: #2c3442;
  height: 55px;
  padding-bottom: 2px;
}
.panel {
  display: flex;
  flex-direction: column;
  min-width: 0;
  background: #3b4453;
}
.folded {
  background: #465062;
}
.tools {
  flex: 1;
  display: flex;
  justify-content: space-between;
  min-height: 0;
  padding: 2px 3px 0;
}
.folded .tools {
  justify-content: center;
}
.panel-title {
  gap: 3px;
  height: 10px;
  color: #c3cad4;
}
.big {
  flex-direction: column;
  justify-content: flex-start;
  white-space: nowrap;
}
.big > svg:first-child {
  width: 20px;
  height: 20px;
  margin-bottom: 1px;
}
.stack {
  display: flex;
  flex-direction: column;
  justify-content: space-between;
  padding: 1px 0 3px;
}
.stack button, .edit-tools button {
  justify-content: flex-start;
  gap: 3px;
}
.edit-tools {
  display: grid;
  grid-template-columns: 16px 16px 22px 10px;
  justify-content: start;
  align-items: center;
}
.layer-side {
  flex: 1;
  padding-left: 4px;
}
.combo {
  flex: 1;
  display: flex;
  align-items: center;
  gap: 3px;
  min-width: 0;
  height: 11px;
  padding: 0 2px;
  background: #4c5667;
}
.swatch {
  width: 8px;
  height: 8px;
  background: #000;
}
.layer-grid {
  display: grid;
  grid-template-columns: repeat(5, 10px);
  gap: 4px 3px;
  padding-top: 3px;
}
.tools.prop-tools {
  padding: 2px 1px 0;
}
.props {
  flex: 1;
  display: flex;
  flex-direction: column;
  gap: 2px;
  min-width: 0;
  padding-left: 2px;
}
.prop {
  display: flex;
  align-items: center;
  gap: 3px;
}
.prop .swatch {
  margin: 0 3px;
}
.rule {
  width: 34px;
  height: 1px;
  background: #c3cad4;
}

/* drawing tabs */
.file-tabs {
  display: flex;
  height: 15px;
  padding-left: 12px;
  border-bottom: 1px solid #4a5362;
  line-height: 14px;
  color: #98a1af;
}
.file-tabs a {
  width: 66px;
  padding: 0 6px;
}
.file-tabs .active {
  display: flex;
  align-items: center;
  justify-content: space-between;
  width: 70px;
  padding: 0 7px;
  background: #3b4453;
  color: #e3e7ed;
}
.file-tabs svg {
  width: 6px;
  height: 6px;
}
.file-tabs button {
  width: 20px;
  font-size: 8px;
}

/* model space */
.canvas {
  position: relative;
  flex: 1;
  min-height: 0;
  overflow: hidden;
  background: #fff;
  color: #333;
}
.drawing {
  width: 100%;
  height: auto;
  font-family: "Liberation Sans", sans-serif;
}
.view-label {
  position: absolute;
  top: 4px;
  left: 2px;
}
.view-controls {
  position: absolute;
  top: 5px;
  right: 5px;
  display: flex;
  gap: 4px;
  color: #555;
}
.view-controls svg {
  width: 7px;
  height: 7px;
}
.viewcube {
  position: absolute;
  top: 19px;
  right: 8px;
  display: grid;
  grid-template-columns: 9px 24px 9px;
  grid-template-rows: 11px 33px 12px 14px;
  gap: 0 4px;
  align-items: center;
  justify-items: center;
  font-size: 8px;
  color: #999;
}
.north, .south, .ucs {
  grid-column: 2;
}
.west {
  grid-column: 1;
}
.face {
  width: 22px;
  height: 22px;
  border: 1px solid #aaa;
  background: #e3e3e3;
  font-size: 6px;
}
.ucs {
  align-self: end;
  padding: 0 2px;
  background: #ececf2;
  font-size: 6px;
  white-space: nowrap;
}
.navbar {
  position: absolute;
  top: 105px;
  right: 2px;
  padding: 2px 1px;
  border: 1px solid #ccc;
  border-radius: 2px;
  background: #f8f8f8;
}
.navbar svg {
  width: 15px;
  height: 112px;
}
.command {
  position: absolute;
  bottom: 0;
  left: 20%;
  right: 20%;
  display: flex;
  align-items: center;
  height: 14px;
  margin: 0 0 0 2px;
  padding-right: 2px;
  border: 1px solid #8b9098;
  border-radius: 2px;
  background: linear-gradient(90deg, #6c737e 30px, #fff 30px);
  font-family: "Liberation Mono", monospace;
  font-style: italic;
}
.command button {
  width: 13px;
  color: #fff;
}
.command button svg {
  width: 8px;
  height: 8px;
}
.grip {
  width: 3px;
  height: 11px;
  margin-left: 1px;
  background: #959ba4;
}
.command label {
  display: flex;
  align-items: center;
  gap: 2px;
  width: 20px;
  padding-left: 2px;
  color: #777;
}
.command input {
  flex: 1;
}
.command input::placeholder {
  color: #888;
}
.up {
  transform: rotate(180deg);
}

/* layout tabs and mode buttons */
.status {
  display: flex;
  justify-content: space-between;
  height: 16px;
}
.layout-tabs {
  display: flex;
  align-items: center;
  height: 11px;
  padding-left: 7px;
  color: #a5adba;
}
.layout-tabs a {
  padding: 1px 6px;
}
.layout-tabs .active {
  background: #323b49;
  color: #fff;
  font-weight: 700;
}
.layout-tabs button {
  width: 20px;
  font-size: 8px;
}
.modes {
  display: flex;
  align-items: center;
  gap: 2px;
  height: 15px;
  padding-right: 2px;
  color: #eef0f2;
}
.modes button {
  width: 12px;
  height: 12px;
}
.modes .caret {
  margin-right: 1px;
}
.modes .on {
  background: #3f73a5;
}
.modes .wide {
  width: 20px;
}

/* system taskbar */
.taskbar {
  display: flex;
  height: 22px;
  background: #3e4245;
  color: #eee;
}
.start {
  width: 27px;
  background: #34383c;
}
.search {
  display: flex;
  align-items: center;
  gap: 6px;
  flex: 0 1 189px;
  padding-left: 6px;
  background: #f1f1f1;
  color: #444;
  font-size: 8px;
}
.search input {
  flex: 1;
  min-width: 0;
  margin-right: -6px;
}
.search input::placeholder {
  color: #444;
}
.search .art {
  width: 44px;
  height: 22px;
}
.task {
  width: 26px;
  margin-left: 1px;
}
.task svg {
  width: 11px;
  height: 11px;
}
.running {
  border-bottom: 1px solid #76b9ed;
}
.task.current svg {
  width: 13px;
  height: 13px;
}
.current {
  background: #63686c;
}
.tray {
  display: flex;
  align-items: center;
  gap: 4px;
  margin-left: auto;
  padding-right: 14px;
}
.lang {
  margin-left: 2px;
}
.tray time {
  margin: 0 6px 0 4px;
  text-align: center;
}
.tray-help {
  width: 12px;
  height: 12px;
  margin-right: 2px;
  border: 1px solid #fff;
  border-radius: 50%;
  background: #1784d8;
  color: #fff;
  font-size: 8px;
  font-weight: 700;
  line-height: 10px;
  text-align: center;
}
```
